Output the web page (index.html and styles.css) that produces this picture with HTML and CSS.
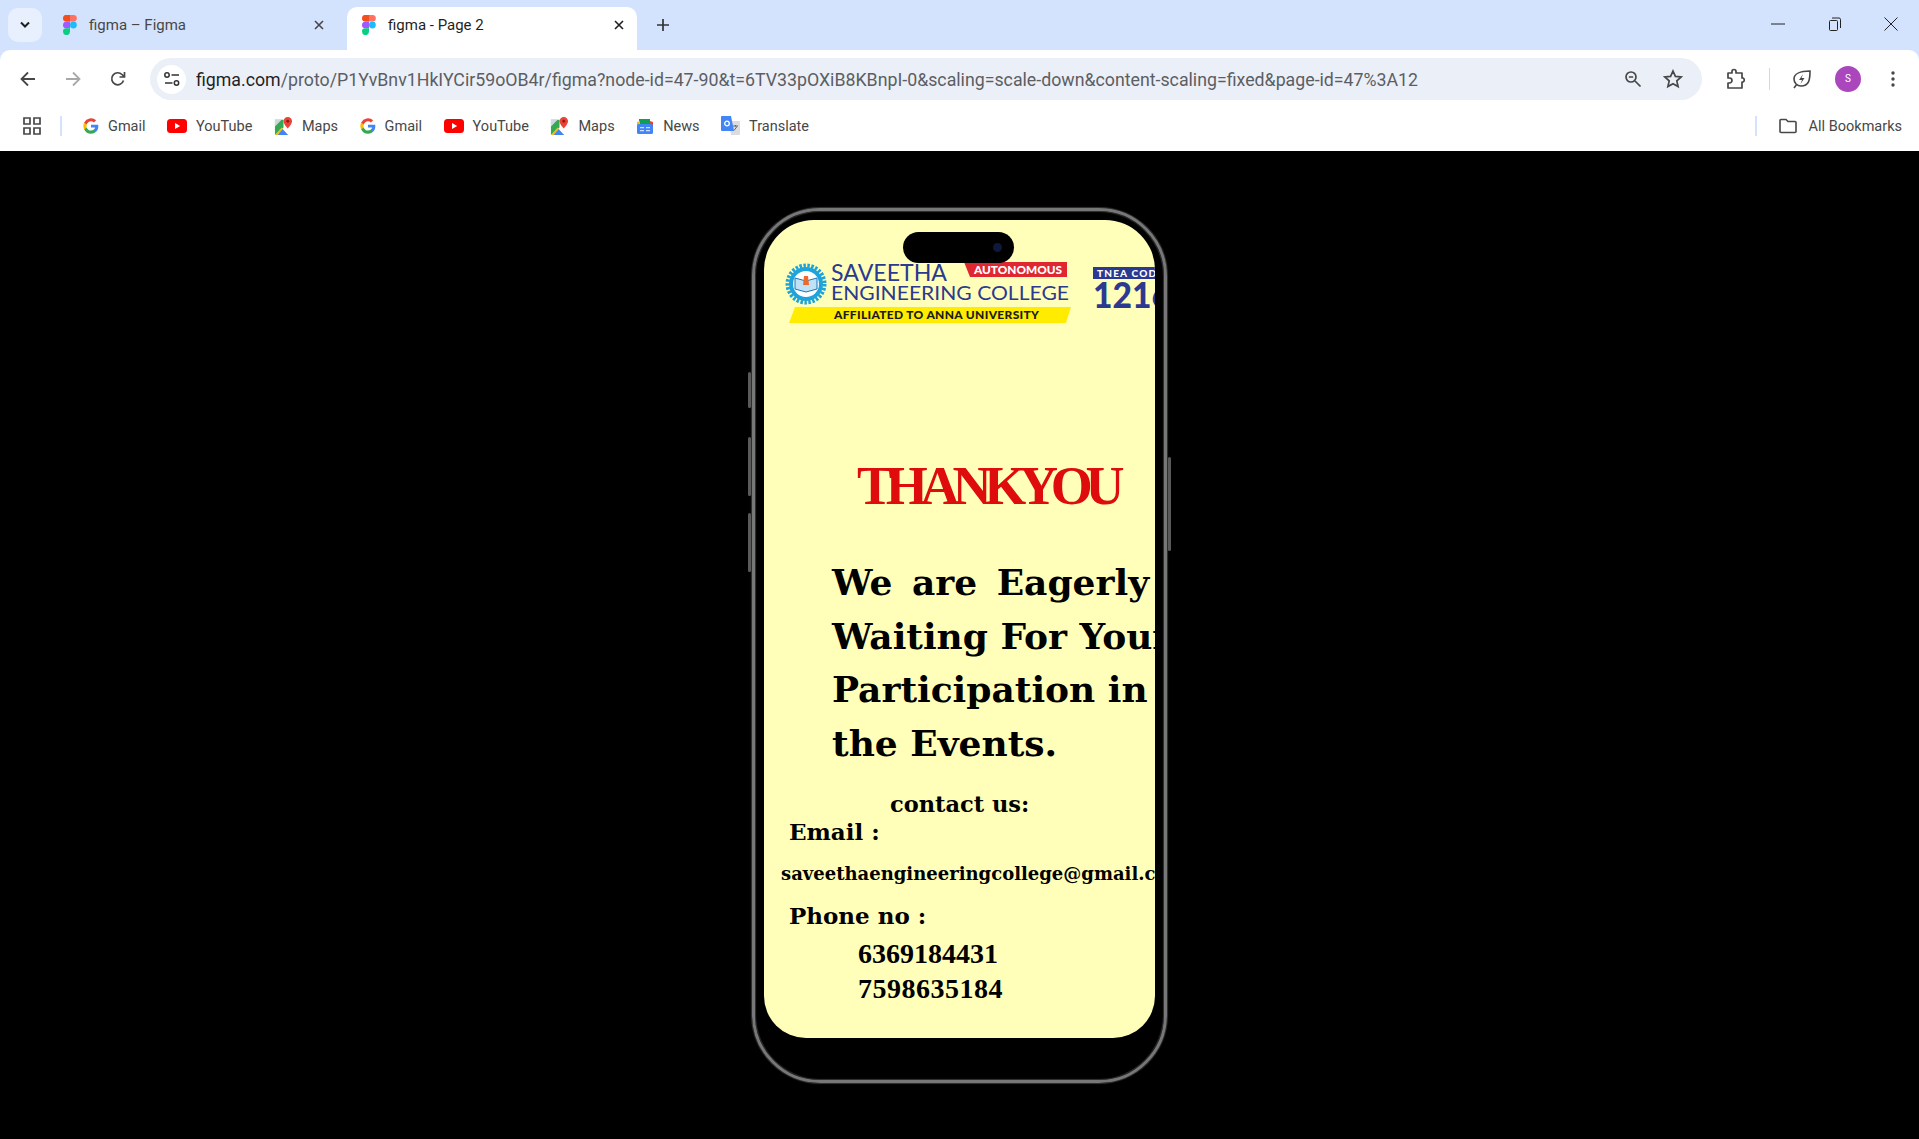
FILE: index.html
```html
<!DOCTYPE html>
<html lang="en">

<head>
    <meta charset="UTF-8">
    <title>figma - Page 2</title>
    <link rel="stylesheet" href="styles.css">
</head>

<body>
    <svg class="defs" width="0" height="0">
        <defs>
            <symbol id="figma" viewBox="0 0 14 20">
                <path fill="#f24e1e" d="M0 3.300A3.300 3.300 0 0 1 3.500 0H7v6.600H3.500A3.300 3.300 0 0 1 0 3.300z"/>
                <path fill="#ff7262" d="M7 0h3.500a3.300 3.300 0 0 1 0 6.600H7z"/>
                <path fill="#a259ff" d="M0 10a3.300 3.300 0 0 1 3.500-3.400H7v6.700H3.500A3.300 3.300 0 0 1 0 10z"/>
                <circle fill="#1abcfe" cx="10.400" cy="10" r="3.400"/>
                <path fill="#0acf83" d="M0 16.600a3.300 3.300 0 0 1 3.500-3.300H7v3.300a3.400 3.400 0 0 1-7 0z"/>
            </symbol>
            <symbol id="google" viewBox="0 0 24 24">
                <path fill="#4285f4" d="M23 12.300c0-.8-.1-1.600-.2-2.300H12v4.400h6.200a5.300 5.300 0 0 1-2.300 3.400v2.900h3.700c2.100-2 3.400-4.900 3.400-8.400z"/>
                <path fill="#34a853" d="M12 23.500c3.100 0 5.700-1 7.600-2.800l-3.700-2.900c-1 .7-2.300 1.100-3.900 1.100-3 0-5.500-2-6.400-4.800H1.800v3A11.500 11.500 0 0 0 12 23.500z"/>
                <path fill="#fbbc05" d="M5.600 14.100a6.900 6.900 0 0 1 0-4.400v-3H1.800a11.500 11.500 0 0 0 0 10.400z"/>
                <path fill="#ea4335" d="M12 5c1.700 0 3.200.6 4.400 1.700l3.300-3.300A11.500 11.500 0 0 0 1.800 6.700l3.800 3C6.500 7 9 5 12 5z"/>
            </symbol>
            <symbol id="youtube" viewBox="0 0 20 14">
                <rect width="20" height="14" rx="3.500" fill="#f00"/>
                <path fill="#fff" d="M8 4l5.200 3L8 10z"/>
            </symbol>
            <symbol id="maps" viewBox="0 0 20 20">
                <path fill="#34a853" d="M1 3h9v8l-9 8z"/>
                <path fill="#fbbc05" d="M1 19l7-8 4 5 1 3z"/>
                <path fill="#4285f4" d="M4 19l5-6 6 6z"/>
                <path fill="#cfd8dc" d="M1 3h7L1 10z"/>
                <path fill="#ea4335" d="M14.500 0a4.500 4.500 0 0 0-4.500 4.500c0 3 4.500 7.500 4.500 7.500S19 7.500 19 4.500A4.500 4.500 0 0 0 14.500 0z"/>
                <circle fill="#8c1c13" cx="14.500" cy="4.500" r="1.500"/>
            </symbol>
        </defs>
    </svg>

    <header class="chrome">
        <div class="tabstrip">
            <div class="tabsearch">
                <svg width="12" height="8" viewBox="0 0 12 8"><path d="M2 1.500l4 4 4-4" fill="none" stroke="#1f1f1f" stroke-width="2"/></svg>
            </div>
            <div class="tab">
                <svg class="tabicon" width="14" height="20"><use href="#figma"/></svg>
                <span class="tabtitle">figma – Figma</span>
                <svg class="tabclose" width="10" height="10" viewBox="0 0 10 10"><path d="M1 1l8 8M9 1l-8 8" stroke="#474747" stroke-width="1.600"/></svg>
            </div>
            <div class="tab active">
                <svg class="tabicon" width="14" height="20"><use href="#figma"/></svg>
                <span class="tabtitle">figma - Page 2</span>
                <svg class="tabclose" width="10" height="10" viewBox="0 0 10 10"><path d="M1 1l8 8M9 1l-8 8" stroke="#1f1f1f" stroke-width="1.600"/></svg>
            </div>
            <svg class="newtab" width="14" height="14" viewBox="0 0 14 14"><path d="M7 1v12M1 7h12" stroke="#333" stroke-width="1.700"/></svg>
            <div class="winctrl">
                <svg width="14" height="14" viewBox="0 0 14 14"><path d="M0 7h14" stroke="#222" stroke-width="1"/></svg>
                <svg width="14" height="14" viewBox="0 0 14 14"><path d="M1.500 4.500a1 1 0 0 1 1-1h6a1 1 0 0 1 1 1v8a1 1 0 0 1-1 1h-6a1 1 0 0 1-1-1zM4 1h7a1.500 1.500 0 0 1 1.500 1.500V11" fill="none" stroke="#222"/></svg>
                <svg width="14" height="14" viewBox="0 0 14 14"><path d="M.5.500l13 13M13.500.500l-13 13" stroke="#222"/></svg>
            </div>
        </div>

        <div class="toolbar">
            <svg class="navicon" width="16" height="16" viewBox="0 0 16 16"><path d="M15 8H2M8 1.500L1.500 8 8 14.500" fill="none" stroke="#474747" stroke-width="1.800"/></svg>
            <svg class="navicon" width="16" height="16" viewBox="0 0 16 16"><path d="M1 8h13M8 1.500L14.500 8 8 14.500" fill="none" stroke="#a8a8a8" stroke-width="1.800"/></svg>
            <svg class="navicon" width="16" height="16" viewBox="0 0 16 16"><path d="M13.500 9.500A6 6 0 1 1 12 3.500L14 5.500M14.500 1v5h-5" fill="none" stroke="#474747" stroke-width="1.700"/></svg>
            <div class="omnibox">
                <span class="siteinfo">
                    <svg width="16" height="14" viewBox="0 0 16 14"><circle cx="3" cy="3" r="2.200" fill="none" stroke="#333" stroke-width="1.500"/><path d="M7.500 3H15M1 11h7.500" stroke="#333" stroke-width="1.500"/><circle cx="12.500" cy="11" r="2.200" fill="none" stroke="#333" stroke-width="1.500"/></svg>
                </span>
                <span class="url"><span class="host">figma.com</span>/proto/P1YvBnv1HkIYCir59oOB4r/figma?node-id=47-90&amp;t=6TV33pOXiB8KBnpI-0&amp;scaling=scale-down&amp;content-scaling=fixed&amp;page-id=47%3A12</span>
                <svg class="omniicon" width="18" height="18" viewBox="0 0 18 18"><circle cx="7" cy="7" r="5" fill="none" stroke="#474747" stroke-width="1.700"/><path d="M4.800 7h4.400M11 11l5.500 5.500" stroke="#474747" stroke-width="1.700"/></svg>
                <svg class="omniicon star" width="20" height="20" viewBox="0 0 20 20"><path d="M10 2l2.400 5.400 5.800.6-4.400 3.900 1.300 5.700L10 14.700l-5.100 2.900 1.300-5.700L1.800 8l5.800-.6z" fill="none" stroke="#474747" stroke-width="1.700"/></svg>
            </div>
            <svg class="extension" width="20" height="22" viewBox="0 0 20 22"><path d="M2 5h4V3.500a2 2 0 0 1 4 0V5h6v5h1a2.200 2.200 0 0 1 0 4h-1v6H2v-5h1.500a2.500 2.500 0 0 0 0-5H2z" fill="none" stroke="#474747" stroke-width="1.700" stroke-linejoin="round"/></svg>
            <span class="vsep"></span>
            <svg class="leaf" width="20" height="20" viewBox="0 0 20 20"><path d="M18 2c0 9-1 15-9 15a7 7 0 0 1-7-7c0-5 6-8 16-8zM2 19l3-4" fill="none" stroke="#474747" stroke-width="1.600"/><path d="M11 5l-4 6h3l-1.500 4 4-6h-3z" fill="#474747"/></svg>
            <span class="avatar">S</span>
            <svg class="dots" width="4" height="16" viewBox="0 0 4 16"><circle cx="2" cy="2" r="1.700" fill="#474747"/><circle cx="2" cy="8" r="1.700" fill="#474747"/><circle cx="2" cy="14" r="1.700" fill="#474747"/></svg>
        </div>

        <div class="bookmarks">
            <svg class="apps" width="18" height="18" viewBox="0 0 18 18"><path d="M1 1h6v6H1zM11 1h6v6h-6zM1 11h6v6H1zM11 11h6v6h-6z" fill="none" stroke="#474747" stroke-width="1.700"/></svg>
            <span class="bsep"></span>
            <a class="mark"><svg width="16" height="16"><use href="#google"/></svg>Gmail</a>
            <a class="mark"><svg width="20" height="14"><use href="#youtube"/></svg>YouTube</a>
            <a class="mark"><svg width="19" height="19"><use href="#maps"/></svg>Maps</a>
            <a class="mark"><svg width="16" height="16"><use href="#google"/></svg>Gmail</a>
            <a class="mark"><svg width="20" height="14"><use href="#youtube"/></svg>YouTube</a>
            <a class="mark"><svg width="19" height="19"><use href="#maps"/></svg>Maps</a>
            <a class="mark">
                <svg width="18" height="17" viewBox="0 0 18 17"><path fill="#0f9d58" d="M3 1h11v5H3z"/><path fill="#ea4335" d="M14 3l3 1v5h-3z"/><path fill="#fbbc05" d="M1 4l3-1v6H1z"/><rect fill="#4285f4" x="1" y="6" width="16" height="10" rx="1.500"/><path fill="#cfe0fc" d="M4 9h4v1.200H4zM4 12h4v1.200H4zM10 9h4v1.200h-4zM10 12h4v1.200h-4z"/></svg>
                News
            </a>
            <a class="mark">
                <svg width="19" height="20" viewBox="0 0 19 20"><path fill="#dadce0" d="M8 5h11v13a1 1 0 0 1-1 1H10z"/><path fill="#4285f4" d="M1 0h9l3 15H1a1 1 0 0 1-1-1V1a1 1 0 0 1 1-1z"/><circle cx="6" cy="7.500" r="2.300" fill="none" stroke="#fff" stroke-width="1.300"/><path d="M12 10h5M14.500 9v1.500M16 10.500l-3 4" stroke="#666" stroke-width="1"/></svg>
                Translate
            </a>
            <span class="bspace"></span>
            <span class="bsep"></span>
            <a class="mark all">
                <svg width="18" height="16" viewBox="0 0 18 16"><path d="M1 2.500a1 1 0 0 1 1-1h5l2 2h7a1 1 0 0 1 1 1v9a1 1 0 0 1-1 1H2a1 1 0 0 1-1-1z" fill="none" stroke="#474747" stroke-width="1.600"/></svg>
                All Bookmarks
            </a>
        </div>
    </header>

    <main class="stage">
        <div class="phone">
            <span class="sidebtn b1"></span>
            <span class="sidebtn b2"></span>
            <span class="sidebtn b3"></span>
            <span class="sidebtn b4"></span>
            <div class="island"><span class="camera"></span></div>

            <div class="screen">
                <!-- college banner, coordinates are screen pixels -->
                <svg class="logo" width="391" height="110" viewBox="0 0 391 110">
                    <circle cx="42" cy="64" r="18.500" fill="none" stroke="#1ea3dc" stroke-width="4" stroke-dasharray="2.500 1.500"/>
                    <circle cx="42" cy="64" r="17" fill="#1ea3dc"/>
                    <circle cx="42" cy="64" r="13" fill="#fff"/>
                    <path d="M31 58l11 3 11-3v11l-11 3-11-3z" fill="#bfe3f4" stroke="#1c75bc"/>
                    <path d="M40 56h4l1 9h-6z" fill="#ee6a2c"/>
                    <text class="lg-name" x="67" y="61" textLength="116" lengthAdjust="spacingAndGlyphs">SAVEETHA</text>
                    <text class="lg-name2" x="67" y="80" textLength="238" lengthAdjust="spacingAndGlyphs">ENGINEERING COLLEGE</text>
                    <path d="M200 42h103v15h-97z" fill="#e0262f"/>
                    <text class="lg-auto" x="210" y="54" textLength="88" lengthAdjust="spacingAndGlyphs">AUTONOMOUS</text>
                    <path d="M31 87h276l-5 16H25z" fill="#ffec00"/>
                    <text class="lg-aff" x="70" y="99" textLength="205" lengthAdjust="spacing">AFFILIATED TO ANNA UNIVERSITY</text>
                    <rect x="329" y="47" width="70" height="12" fill="#2b3990"/>
                    <text class="lg-tnea" x="333" y="57" textLength="66" lengthAdjust="spacing">TNEA CODE</text>
                    <text class="lg-code" x="329" y="88" textLength="78" lengthAdjust="spacingAndGlyphs">1216</text>
                </svg>

                <h1 class="thanks">THANKYOU</h1>
                <p class="invite"><span class="wide">We are Eagerly</span><br>Waiting For Your<br>Participation in<br>the Events.</p>
                <p class="contact">contact us:</p>
                <p class="label email-label">Email :</p>
                <p class="email">saveethaengineeringcollege@gmail.com</p>
                <p class="label phone-label">Phone no :</p>
                <p class="number first">6369184431</p>
                <p class="number second">7598635184</p>
            </div>
        </div>
    </main>
</body>

</html>
```

FILE: styles.css
```css
* {
    box-sizing: border-box;
}

body {
    margin: 0;
    width: 1919px;
    height: 1139px;
    overflow: hidden;
    background-color: #000;
    font-family: Roboto, "Liberation Sans", sans-serif;
}

svg {
    display: block;
    flex: none;
}

.defs {
    height: 0;
}

/* browser */
.chrome {
    height: 151px;
    background-color: #d3e3fd;
}

.tabstrip {
    height: 50px;
    display: flex;
    align-items: flex-end;
    padding-left: 8px;
}

.tabsearch {
    width: 34px;
    height: 34px;
    margin-bottom: 8px;
    border-radius: 10px;
    background-color: #e9f0fd;
    display: flex;
    align-items: center;
    justify-content: center;
}

.tab {
    width: 290px;
    height: 43px;
    margin-left: 6px;
    padding: 0 14px 7px 15px;
    display: flex;
    align-items: center;
    font-size: 15px;
    color: #474747;
}

.tab + .tab {
    margin-left: 9px;
}

.tab.active {
    width: 290px;
    padding-right: 13px;
    border-radius: 10px 10px 0 0;
    background-color: #fff;
    color: #1f1f1f;
}

.tabtitle {
    flex: 1;
    margin-left: 12px;
}

.newtab {
    margin: 0 0 18px 19px;
}

.winctrl {
    margin-left: auto;
    margin-bottom: 19px;
    padding-right: 21px;
    display: flex;
    gap: 42px;
}

.winctrl svg:first-child {
    margin-right: 1px;
}

.toolbar {
    height: 50px;
    padding: 8px 0 0 20px;
    display: flex;
    align-items: flex-start;
    background-color: #fff;
    border-radius: 10px 10px 0 0;
}

.navicon {
    margin: 13px 29px 0 0;
}

.navicon:nth-child(3) {
    margin-right: 24px;
}

.omnibox {
    width: 1552px;
    height: 42px;
    padding: 0 19px 0 7px;
    display: flex;
    align-items: center;
    border-radius: 21px;
    background-color: #ebeff8;
}

.siteinfo {
    width: 29px;
    height: 29px;
    border-radius: 50%;
    background-color: #fff;
    display: flex;
    align-items: center;
    justify-content: center;
}

.url {
    flex: 1;
    margin-left: 10px;
    padding-top: 1px;
    font-size: 17.75px;
    color: #5b5e63;
    white-space: nowrap;
    overflow: hidden;
}

.host {
    color: #1f1f1f;
}

.omniicon.star {
    margin-left: 21px;
}

.extension {
    margin: 10px 0 0 24px;
}

.vsep {
    width: 1px;
    height: 22px;
    margin: 10px 0 0 23px;
    background-color: #c7d9f7;
}

.leaf {
    margin: 11px 0 0 22px;
}

.avatar {
    width: 26px;
    height: 26px;
    margin: 8px 0 0 23px;
    border-radius: 50%;
    background-color: #ab47bc;
    color: #fff;
    font-size: 10px;
    line-height: 26px;
    text-align: center;
}

.dots {
    margin: 13px 0 0 30px;
}

.bookmarks {
    height: 51px;
    padding: 1px 17px 0 23px;
    display: flex;
    align-items: center;
    gap: 21.5px;
    background-color: #fff;
}

.apps {
    margin-right: -3px;
}

.bsep {
    width: 2px;
    height: 20px;
    background-color: #d3e3fd;
}

.bspace {
    flex: 1;
}

.mark {
    display: flex;
    align-items: center;
    gap: 9px;
    font-size: 14.5px;
    color: #474747;
}

.mark.all {
    gap: 12px;
}

/* phone mockup */
.stage {
    height: 988px;
    padding: 57px 0 0 752px;
}

.phone {
    width: 415px;
    height: 875px;
    padding: 9px 9px 0 9px;
    border: 3px solid #777;
    border-radius: 68px;
    box-shadow: inset 0 0 1px 1px #333, 0 0 1px 1px #333;
    position: relative;
}

.sidebtn {
    width: 3px;
    position: absolute;
    left: -7px;
    background-color: #5a5a5a;
    border-radius: 2px;
}

.b1 {
    top: 161px;
    height: 36px;
}

.b2 {
    top: 226px;
    height: 59px;
}

.b3 {
    top: 302px;
    height: 59px;
}

.b4 {
    left: auto;
    right: -7px;
    top: 246px;
    height: 94px;
}

.island {
    width: 111px;
    height: 31px;
    position: absolute;
    top: 21px;
    left: 148px;
    z-index: 1;
    border-radius: 16px;
    background-color: #000;
}

.camera {
    width: 9px;
    height: 9px;
    position: absolute;
    top: 11px;
    right: 12px;
    border-radius: 50%;
    background-color: #10183a;
}

.screen {
    width: 391px;
    height: 818px;
    overflow: hidden;
    border-radius: 50px 50px 42px 42px;
    background-color: #ffffb9;
    color: #000;
    font-family: "DejaVu Serif", "Liberation Serif", serif;
    font-weight: 700;
    white-space: nowrap;
}

.screen p,
.screen h1 {
    margin: 0;
}

.lg-name,
.lg-name2 {
    font-family: Lato, "Noto Sans", sans-serif;
    font-weight: 400;
    font-size: 23px;
    fill: #2b3990;
}

.lg-name2 {
    font-size: 20px;
}

.lg-auto,
.lg-aff,
.lg-tnea {
    font-family: Lato, "Noto Sans", sans-serif;
    font-weight: 900;
    font-size: 12px;
    fill: #fff;
}

.lg-aff {
    fill: #1b1b1b;
}

.lg-tnea {
    font-size: 10px;
}

.lg-code {
    font-family: Lato, "Noto Sans", sans-serif;
    font-weight: 900;
    font-size: 36px;
    fill: #2b3990;
}

.logo {
    height: 110px;
}

.screen .thanks {
    margin-top: 131px;
    padding-left: 93px;
    font-family: "Liberation Serif", serif;
    font-size: 54px;
    line-height: 50px;
    letter-spacing: -7.2px;
    color: #de0c0c;
}

.screen .invite {
    margin-top: 45px;
    padding-left: 68px;
    font-size: 36px;
    line-height: 53.5px;
}

.wide {
    word-spacing: 7px;
}

.screen .contact {
    margin-top: 19px;
    padding-left: 126px;
    font-size: 22.5px;
    line-height: 30px;
}

.label {
    padding-left: 25px;
    font-size: 23px;
    line-height: 28px;
}

.screen .email-label {
    margin-top: -1px;
}

.screen .email {
    margin-top: 13px;
    padding-left: 17px;
    font-size: 18px;
    line-height: 30px;
}

.screen .phone-label {
    margin-top: 13px;
}

.number {
    padding-left: 94px;
    font-family: "Liberation Serif", serif;
    font-size: 28px;
    line-height: 35px;
}

.screen .first {
    margin-top: 6px;
}

.number.second {
    letter-spacing: .5px;
}
```
